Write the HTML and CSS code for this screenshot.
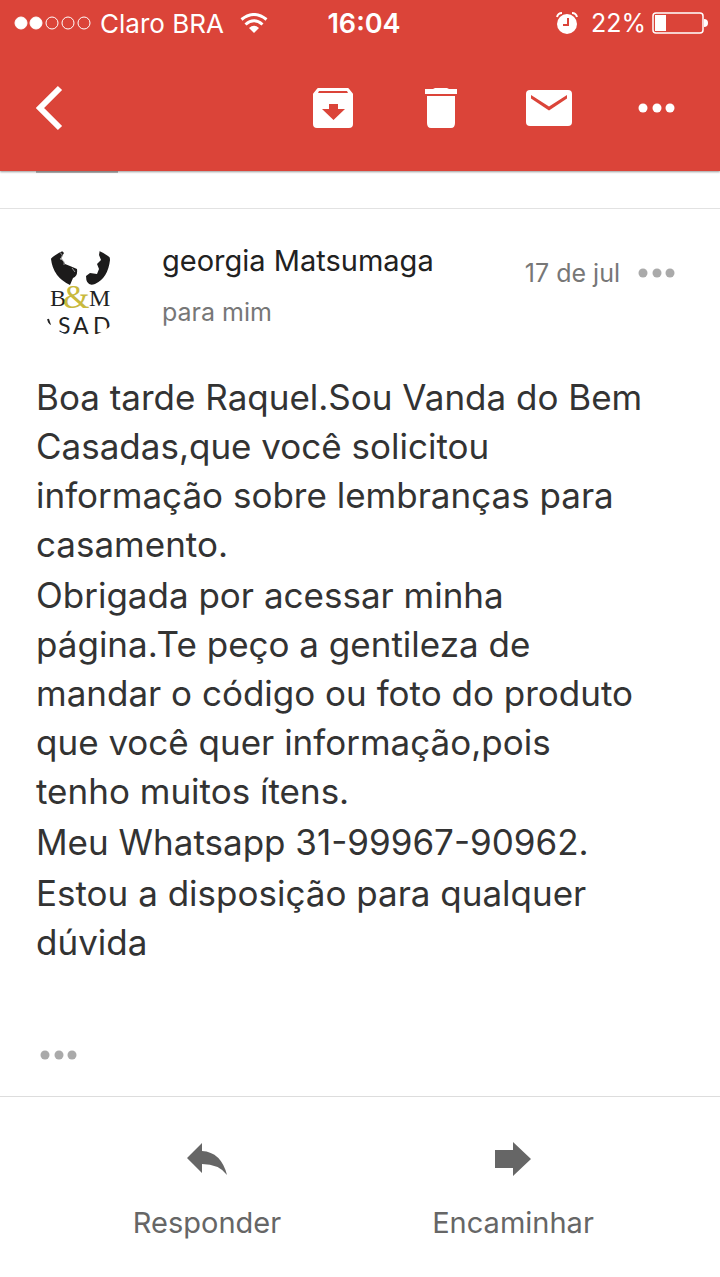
FILE: index.html
```
<!DOCTYPE html>
<html lang="pt-BR">
<head>
  <meta charset="UTF-8" />
  <meta name="viewport" content="width=device-width, initial-scale=1.0"/>
  <title>georgia Matsumaga</title>
  <link rel="stylesheet" href="styles.css">
</head>
<body>
  <header class="top">
    <div class="status">
      <div class="carrier">
        <svg width="78" height="14" viewBox="0 0 78 14" fill="none" stroke="#fff">
          <circle cx="7" cy="7" r="6" fill="#fff"/>
          <circle cx="22" cy="7" r="6" fill="#fff"/>
          <circle cx="38" cy="7" r="6"/>
          <circle cx="54" cy="7" r="6"/>
          <circle cx="70" cy="7" r="6"/>
        </svg>
        <span>Claro BRA</span>
        <svg class="wifi" width="28" height="20" viewBox="0 0 28 20" fill="none" stroke="#fff" stroke-width="3">
          <path d="M1.500 6.500Q14-3.500 26.500 6.500"/>
          <path d="M5.500 11.500Q14 4 22.500 11.500"/>
          <path d="M14 20L9 15Q14 10.500 19 15Z" fill="#fff" stroke="none"/>
        </svg>
      </div>
      <div class="clock">16:04</div>
      <div class="power">
        <svg width="24" height="24" viewBox="0 0 24 24">
          <circle cx="12" cy="13" r="10" fill="#fff"/>
          <path d="M2 6Q3 2 7 2M17 2Q21 2 22 6" fill="none" stroke="#fff" stroke-width="2"/>
          <path d="M13 7V14H8" fill="none" stroke="#db4439" stroke-width="2"/>
        </svg>
        <span class="percent">22%</span>
        <svg width="56" height="22" viewBox="0 0 56 22">
          <rect x="1" y="1" width="50" height="20" rx="3" fill="none" stroke="#fff" stroke-width="1.500"/>
          <rect x="3" y="3" width="11" height="16" fill="#fff"/>
          <path d="M52 7Q56 7 56 11Q56 15 52 15Z" fill="#fff"/>
        </svg>
      </div>
    </div>
    <nav class="toolbar">
      <button class="back" aria-label="Voltar">
        <svg width="28" height="46" viewBox="0 0 28 46" fill="none" stroke="#fff" stroke-width="6">
          <path d="M24 3L4 23L24 43"/>
        </svg>
      </button>
      <button class="tool" aria-label="Arquivar">
        <svg width="42" height="42" viewBox="0 0 42 42">
          <path d="M6 2H36L40 7V37Q40 40 37 40H5Q2 40 2 37V7Z" fill="#fff" stroke="#fff" stroke-width="2" stroke-linejoin="round"/>
          <path d="M7 4H35L36 6H6Z" fill="#db4439"/>
          <path d="M17 17H26V22H33L21.500 33L10 22H17Z" fill="#db4439"/>
        </svg>
      </button>
      <button class="tool" aria-label="Excluir">
        <svg width="32" height="42" viewBox="0 0 32 42" fill="#fff">
          <path d="M0 2H8L10 1H22L24 2H32V7H0Z"/>
          <path d="M2 9H30V36Q30 41 26 41H6Q2 41 2 36Z"/>
        </svg>
      </button>
      <button class="tool" aria-label="Marcar como não lida">
        <svg width="46" height="38" viewBox="0 0 46 38">
          <rect x="0" y="1" width="46" height="36" rx="4" fill="#fff"/>
          <path d="M5 6L23 17.500L41 6V9.500L23 21.500L5 9.500Z" fill="#db4439"/>
        </svg>
      </button>
      <button class="tool" aria-label="Mais opções">
        <svg width="38" height="10" viewBox="0 0 38 10" fill="#fff">
          <circle cx="5" cy="5" r="4.500"/>
          <circle cx="19" cy="5" r="4.500"/>
          <circle cx="32" cy="5" r="4.500"/>
        </svg>
      </button>
    </nav>
  </header>

  <div class="previous"><div class="previous-edge"></div></div>

  <main class="message">
    <div class="sender">
      <svg class="avatar" width="90" height="90" viewBox="0 0 90 90" role="img" aria-label="B&amp;M Casadas">
        <path d="M24 2Q15 4 15 12Q17 30 34 38L37 31Q42 29 41 22L34 19L29 17L25 11L28 6Z" fill="#1c1b1b"/>
        <path d="M23 5Q29 8 24 12Q29 13 28 18M36 21L39 25" fill="none" stroke="#999"/>
        <path d="M64 2Q74 4 74 13Q72 31 59 37Q50 40 50 29L54 26L61 27L63 22L61 17L65 13L63 8Z" fill="#1c1b1b"/>
        <text x="14" y="59" class="logo-text">B</text>
        <text x="27" y="61" class="logo-amp">&amp;</text>
        <text x="53" y="59" class="logo-text">M</text>
        <path d="M12 72L14 78" stroke="#222" stroke-width="2"/>
        <text x="22" y="87" class="logo-name">S</text>
        <text x="37" y="87" class="logo-name">A</text>
        <text x="57" y="87" class="logo-name">D</text>
      </svg>
      <div class="who">
        <h1>georgia Matsumaga</h1>
        <p>para mim</p>
      </div>
      <div class="when">
        <time>17 de jul</time>
        <button aria-label="Opções da mensagem">
          <svg width="38" height="10" viewBox="0 0 38 10" fill="#aaa">
            <circle cx="5" cy="5" r="4.500"/>
            <circle cx="19" cy="5" r="4.500"/>
            <circle cx="32" cy="5" r="4.500"/>
          </svg>
        </button>
      </div>
    </div>

    <div class="text">
      <p>Boa tarde Raquel.Sou Vanda do Bem<br>Casadas,que você solicitou<br>informação sobre lembranças para<br>casamento.</p>
      <p>Obrigada por acessar minha<br>página.Te peço a gentileza de<br>mandar o código ou foto do produto<br>que você quer informação,pois<br>tenho muitos ítens.</p>
      <p>Meu Whatsapp 31-99967-90962.</p>
      <p>Estou a disposição para qualquer<br>dúvida</p>
    </div>

    <button class="quoted" aria-label="Mostrar texto citado">
      <svg width="38" height="10" viewBox="0 0 38 10" fill="#aaa">
        <circle cx="5" cy="5" r="4.500"/>
        <circle cx="19" cy="5" r="4.500"/>
        <circle cx="32" cy="5" r="4.500"/>
      </svg>
    </button>
  </main>

  <footer class="actions">
    <button>
      <svg width="42" height="34" viewBox="0 0 42 34" fill="#666">
        <path d="M1 16L16 1V9Q35 10 41 33Q33 22 16 22V31Z"/>
      </svg>
      Responder
    </button>
    <button>
      <svg width="36" height="34" viewBox="0 0 36 34" fill="#666">
        <path d="M0 8H18V0L36 17L18 34V26H0Z"/>
      </svg>
      Encaminhar
    </button>
  </footer>
</body>
</html>
```

FILE: styles.css
```
* {
  box-sizing: border-box;
}
body {
  margin: 0;
  font-family: Inter, "Liberation Sans", sans-serif;
  background-color: #fff;
  color: #333;
}
h1, p {
  margin: 0;
}
button {
  display: flex;
  align-items: center;
  justify-content: center;
  padding: 0;
  border: none;
  background: none;
  font: inherit;
  color: inherit;
  cursor: pointer;
}
svg {
  display: block;
  flex: none;
}

/* red header */
.top {
  position: relative;
  background-color: #db4439;
  color: #fff;
  padding-bottom: 16px;
  box-shadow: 0 1px 2px rgba(0, 0, 0, 0.4);
}
.status {
  display: grid;
  grid-template-columns: 1fr auto 1fr;
  align-items: center;
  height: 46px;
  padding: 0 12px 0 14px;
  font-size: 26px;
}
.carrier, .power {
  display: flex;
  align-items: center;
  gap: 8px;
}
.wifi {
  margin-left: 8px;
}
.power {
  justify-content: flex-end;
  gap: 6px;
}
.percent {
  margin-left: 6px;
  font-size: 25px;
}
.clock {
  padding-left: 6px;
  font-size: 27px;
  font-weight: 600;
}
.toolbar {
  display: flex;
  align-items: center;
  height: 109px;
  padding: 14px 9px 0 36px;
}
.back {
  margin-right: auto;
}
.tool {
  width: 108px;
  height: 80px;
}

/* bottom edge of the message above */
.previous {
  height: 38px;
  padding-left: 36px;
  border-bottom: 1px solid #e2e2e2;
}
.previous-edge {
  width: 82px;
  height: 2px;
  background-color: #bbb;
}

.message {
  padding: 38px 36px 0;
}
.sender {
  display: flex;
  height: 90px;
  padding-right: 8px;
}
.avatar {
  border-radius: 50%;
}
.logo-text {
  font-family: "Liberation Serif", serif;
  font-size: 24px;
  fill: #222;
}
.logo-amp {
  font-family: "Liberation Serif", serif;
  font-size: 34px;
  fill: #c9b93c;
}
.logo-name {
  font-family: Lato, sans-serif;
  font-size: 23px;
  fill: #222;
}
.who {
  flex: 1;
  margin-left: 36px;
}
.who h1 {
  font-size: 29px;
  line-height: 28px;
  font-weight: 400;
  color: #212121;
}
.who p {
  margin-top: 23px;
  font-size: 25px;
  line-height: 28px;
  color: #777;
}
.when {
  display: flex;
  align-items: center;
  gap: 18px;
  height: 51px;
  font-size: 25px;
  color: #777;
}
.text {
  margin-top: 36px;
  font-size: 35px;
  line-height: 49px;
}
.text p + p {
  margin-top: 2px;
}
.quoted {
  margin-top: 83px;
  padding: 0 4px;
}

/* reply and forward */
.actions {
  display: flex;
  margin-top: 36px;
  padding: 45px 54px 36px;
  border-top: 1px solid #ddd;
  font-size: 29px;
  line-height: 36px;
  color: #666;
}
.actions button {
  flex: 1;
  flex-direction: column;
  gap: 29px;
}
```
